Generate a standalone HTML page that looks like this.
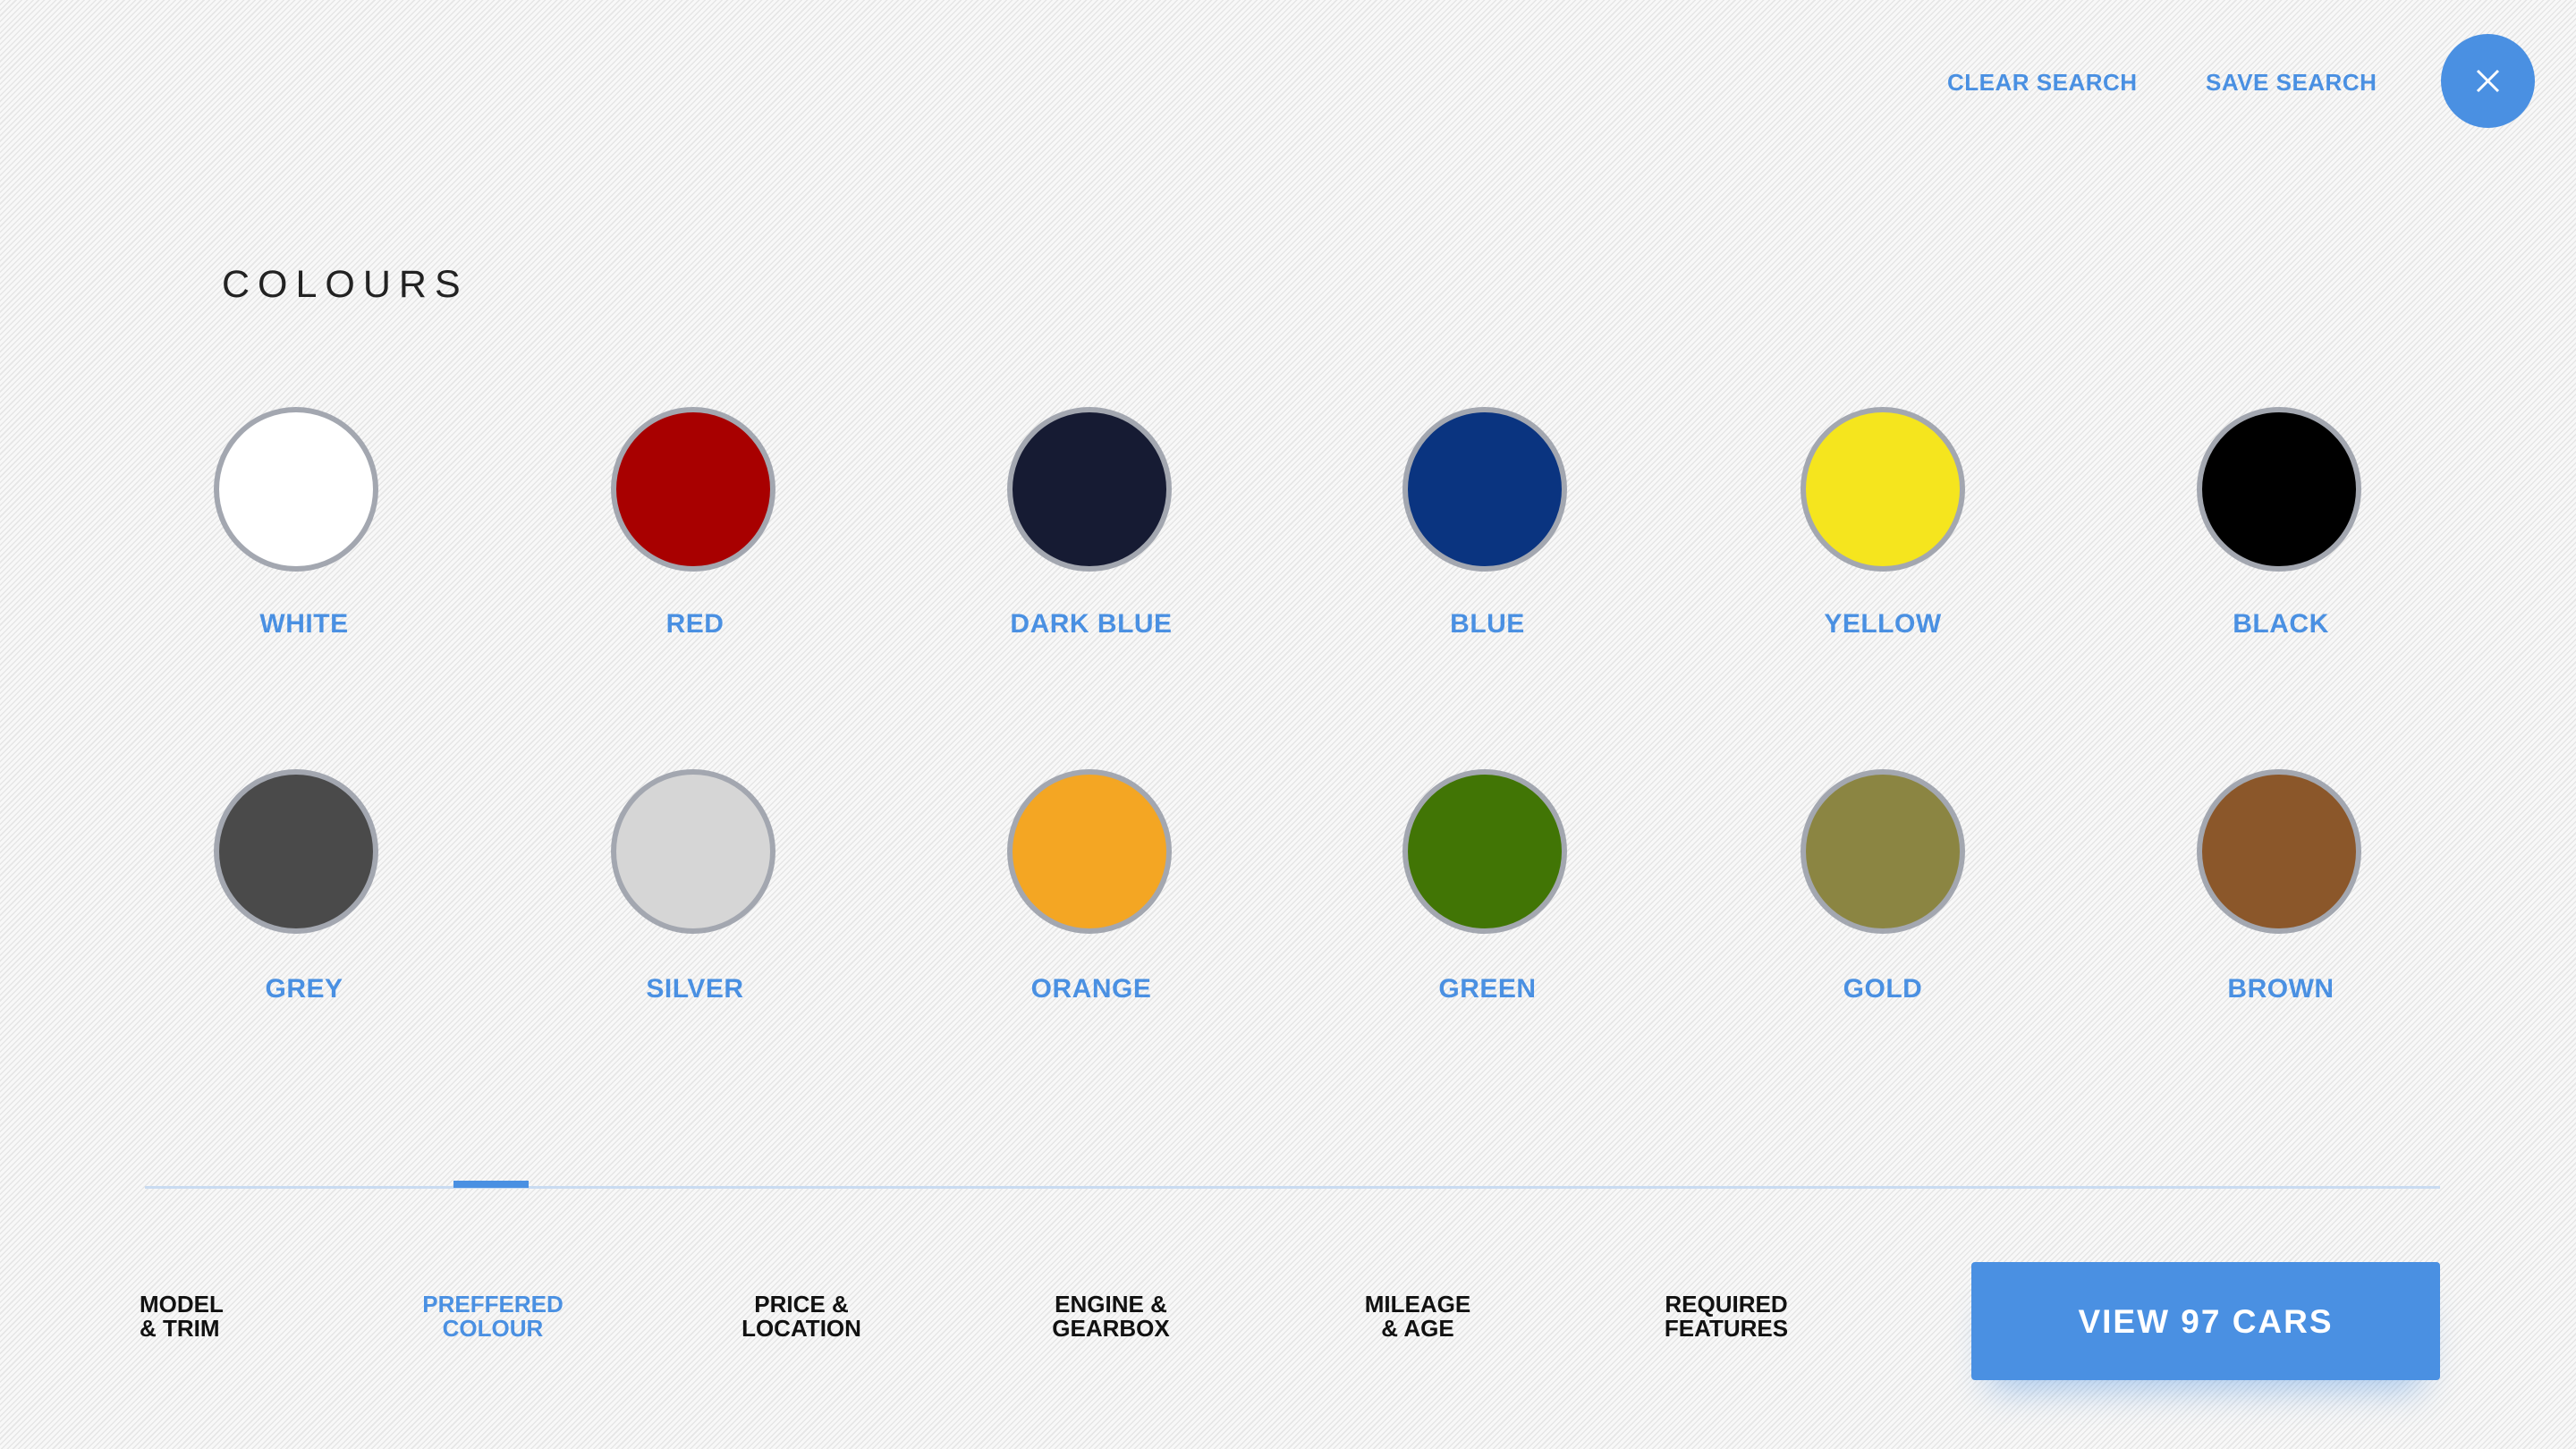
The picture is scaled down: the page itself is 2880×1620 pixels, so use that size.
<!DOCTYPE html>
<html><head><meta charset="utf-8"><style>
*{margin:0;padding:0;box-sizing:border-box}
body{width:2880px;height:1620px;position:relative;overflow:hidden;font-family:"Liberation Sans",sans-serif;
background:#f6f6f6 repeating-linear-gradient(135deg,#f8f8f8 0px,#f8f8f8 3px,#e6e6e6 3px,#e6e6e6 4.5px);}
.top{position:absolute;top:77px;font-size:26px;font-weight:bold;color:#4a90e2;letter-spacing:0.5px;}
.close{position:absolute;left:2729px;top:38px;width:105px;height:105px;border-radius:50%;background:#4a90e2}
h1{position:absolute;left:248px;top:294px;font-size:43px;font-weight:normal;letter-spacing:9px;color:#222}
.sw{position:absolute;width:184px;height:184px;border-radius:50%;border:6px solid #a3a7b0}
.lb{position:absolute;width:300px;text-align:center;font-size:30px;font-weight:bold;color:#4a90e2;letter-spacing:0.5px}
.line{position:absolute;left:162px;top:1326px;width:2566px;height:3px;background:#c9dbf1}
.act{position:absolute;left:507px;top:1320px;width:84px;height:8px;background:#4a90e2}
.tab{position:absolute;top:1445px;font-size:26px;font-weight:bold;line-height:27px;color:#111;text-align:center;width:240px}
.btn{position:absolute;left:2204px;top:1411px;width:524px;height:132px;background:#4a90e2;border-radius:4px;color:#fff;font-size:37px;font-weight:bold;letter-spacing:2px;text-align:center;line-height:134px;box-shadow:0 30px 40px -20px rgba(74,144,226,.45)}
</style></head><body>
<div class="top" style="left:2177px">CLEAR SEARCH</div>
<div class="top" style="left:2466px">SAVE SEARCH</div>
<div class="close"><svg width="105" height="105" viewBox="0 0 105 105"><path d="M41 41L64 64M64 41L41 64" stroke="#fff" stroke-width="3"/></svg></div>
<h1>COLOURS</h1>

<div class="sw" style="left:239px;top:455px;background:#fff"></div>
<div class="sw" style="left:683px;top:455px;background:#a80000"></div>
<div class="sw" style="left:1126px;top:455px;background:#161b33"></div>
<div class="sw" style="left:1568px;top:455px;background:#0a3480"></div>
<div class="sw" style="left:2013px;top:455px;background:#f5e51e"></div>
<div class="sw" style="left:2456px;top:455px;background:#000"></div>
<div class="lb" style="left:190px;top:681px">WHITE</div>
<div class="lb" style="left:627px;top:681px">RED</div>
<div class="lb" style="left:1070px;top:681px">DARK BLUE</div>
<div class="lb" style="left:1513px;top:681px">BLUE</div>
<div class="lb" style="left:1955px;top:681px">YELLOW</div>
<div class="lb" style="left:2400px;top:681px">BLACK</div>

<div class="sw" style="left:239px;top:860px;background:#4a4a4a"></div>
<div class="sw" style="left:683px;top:860px;background:#d6d6d6"></div>
<div class="sw" style="left:1126px;top:860px;background:#f4a623"></div>
<div class="sw" style="left:1568px;top:860px;background:#417505"></div>
<div class="sw" style="left:2013px;top:860px;background:#8b8542"></div>
<div class="sw" style="left:2456px;top:860px;background:#8b572a"></div>
<div class="lb" style="left:190px;top:1089px">GREY</div>
<div class="lb" style="left:627px;top:1089px">SILVER</div>
<div class="lb" style="left:1070px;top:1089px">ORANGE</div>
<div class="lb" style="left:1513px;top:1089px">GREEN</div>
<div class="lb" style="left:1955px;top:1089px">GOLD</div>
<div class="lb" style="left:2400px;top:1089px">BROWN</div>

<div class="line"></div><div class="act"></div>
<div class="tab" style="left:156px;width:auto;text-align:left">MODEL<br>&amp; TRIM</div>
<div class="tab" style="left:431px;color:#4a90e2">PREFFERED<br>COLOUR</div>
<div class="tab" style="left:776px">PRICE &amp;<br>LOCATION</div>
<div class="tab" style="left:1122px">ENGINE &amp;<br>GEARBOX</div>
<div class="tab" style="left:1465px">MILEAGE<br>&amp; AGE</div>
<div class="tab" style="left:1810px">REQUIRED<br>FEATURES</div>
<div class="btn">VIEW 97 CARS</div>
</body></html>
